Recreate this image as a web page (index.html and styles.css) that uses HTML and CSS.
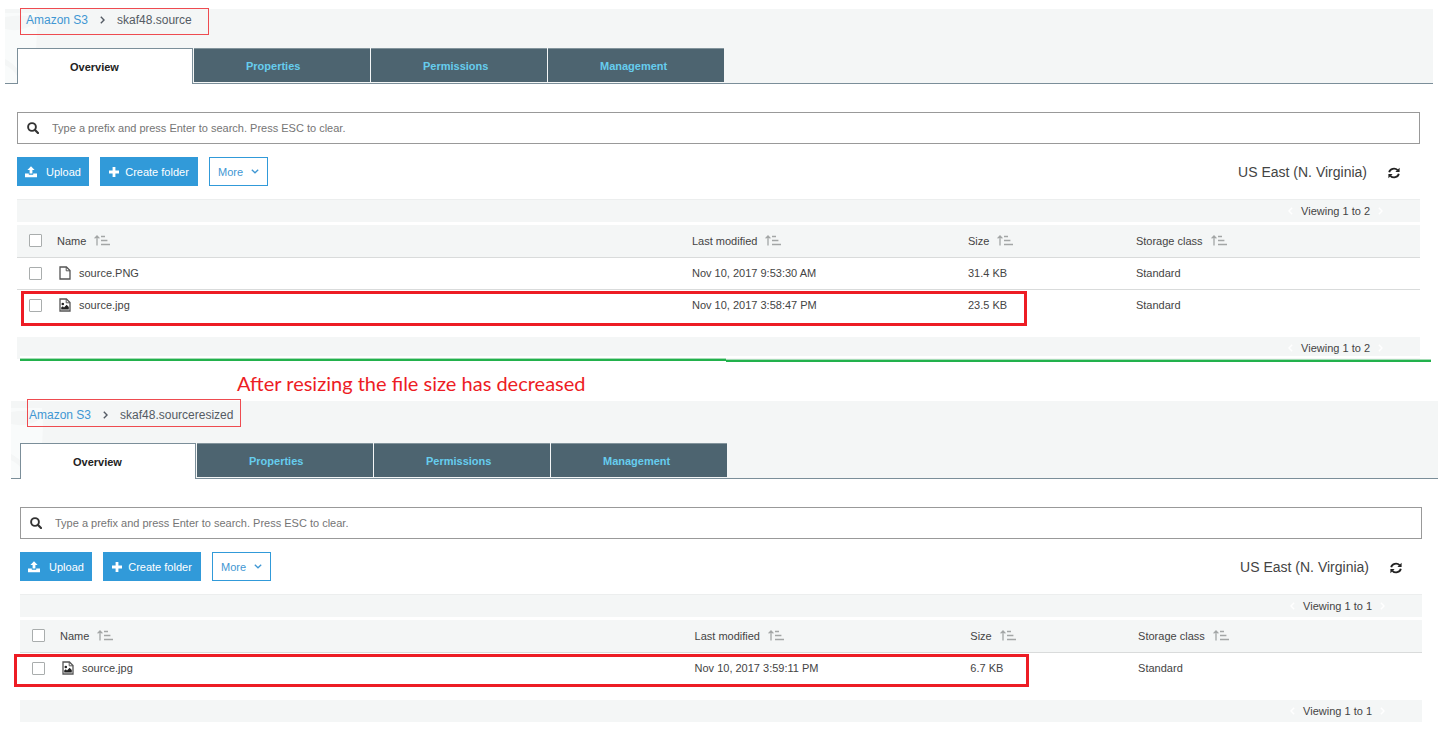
FILE: index.html
```html
<!DOCTYPE html>
<html lang="en">
<head>
<meta charset="utf-8">
<title>Amazon S3 bucket comparison</title>
<link rel="stylesheet" href="styles.css">
</head>
<body>
<svg class="sprite" aria-hidden="true">
  <symbol id="search" viewBox="0 0 12 12"><circle cx="5" cy="5" r="3.9" fill="none" stroke="currentColor" stroke-width="1.9"/><path d="M7.8 7.8L11 11" stroke="currentColor" stroke-width="2.2" stroke-linecap="round"/></symbol>
  <symbol id="upload" viewBox="0 0 12 12"><path d="M6 0.2L9.6 4H7.4V7.6H4.6V4H2.4Z" fill="currentColor"/><path d="M0 7.6H3.8V8.8H8.2V7.6H12V11.2H0Z" fill="currentColor"/></symbol>
  <symbol id="plus" viewBox="0 0 10 10"><path d="M5 0V10M0 5H10" stroke="currentColor" stroke-width="2.8"/></symbol>
  <symbol id="down" viewBox="0 0 8 5"><path d="M0.8 0.8L4 3.8L7.2 0.8" fill="none" stroke="currentColor" stroke-width="1.3"/></symbol>
  <symbol id="right" viewBox="0 0 5 8"><path d="M0.8 0.8L4 4L0.8 7.2" fill="none" stroke="currentColor" stroke-width="1.4"/></symbol>
  <symbol id="left" viewBox="0 0 5 8"><path d="M4.2 0.8L1 4L4.2 7.2" fill="none" stroke="currentColor" stroke-width="1.4"/></symbol>
  <symbol id="refresh" viewBox="0 0 12 12"><path d="M1.2 5.2A4.8 4.3 0 0 1 9.6 3.2M10.8 6.8A4.8 4.3 0 0 1 2.4 8.8" fill="none" stroke="currentColor" stroke-width="1.8"/><path d="M11.6 0.8V5H7.4ZM0.4 11.2V7H4.6Z" fill="currentColor"/></symbol>
  <symbol id="sort" viewBox="0 0 16 11"><path d="M3 10.5V1.2M0.6 3.4L3 1L5.4 3.4M7 1.5H11M7 5.5H13.4M7 9.5H16" fill="none" stroke="currentColor" stroke-width="1.3"/></symbol>
  <symbol id="file" viewBox="0 0 12 14"><path d="M1 1H7.4L11 4.6V13H1Z" fill="#fff" stroke="currentColor" stroke-width="1.3"/><path d="M7.2 1V4.8H11" fill="none" stroke="currentColor"/></symbol>
  <symbol id="image" viewBox="0 0 12 14"><path d="M1 1H7.4L11 4.6V13H1Z" fill="#fff" stroke="currentColor" stroke-width="1.3"/><path d="M7.2 1V4.8H11" fill="none" stroke="currentColor"/><circle cx="3.8" cy="6" r="1.3" fill="#222"/><path d="M2.2 11.4V9.6L3.8 8.2L5 9.4L7.6 6.8L9.8 9V11.4Z" fill="#222"/></symbol>
  <symbol id="mark" viewBox="0 0 33 70"><path d="M0 0H31Q35 40 22 70H0Z" fill="#f9fbfb"/><path d="M0 16Q16 20 31 10V4Q14 1 0 4ZM0 46Q8 50 16 60L13 64Q7 55 0 52Z" fill="#f4f6f6"/></symbol>
</svg>

<section class="panel panel-source">
  <header class="head">
    <svg class="mark" aria-hidden="true"><use href="#mark"/></svg>
    <nav class="crumbs" aria-label="Breadcrumb"><a href="#">Amazon S3</a><svg class="chev" aria-hidden="true"><use href="#right"/></svg><span>skaf48.source</span></nav>
    <div class="tabs">
      <button class="tab active" type="button">Overview</button>
      <button class="tab" type="button">Properties</button>
      <button class="tab" type="button">Permissions</button>
      <button class="tab" type="button">Management</button>
    </div>
  </header>
  <div class="content">
    <label class="search"><svg class="i12" aria-hidden="true"><use href="#search"/></svg><input type="text" aria-label="Search by prefix" placeholder="Type a prefix and press Enter to search. Press ESC to clear."></label>
    <div class="actions">
      <button class="btn upload" type="button"><svg class="i12" aria-hidden="true"><use href="#upload"/></svg>Upload</button>
      <button class="btn create" type="button"><svg class="i10" aria-hidden="true"><use href="#plus"/></svg>Create folder</button>
      <button class="btn more" type="button">More<svg class="down" aria-hidden="true"><use href="#down"/></svg></button>
      <span class="region">US East (N. Virginia)</span>
      <button class="refresh" type="button" aria-label="Refresh"><svg class="i12" aria-hidden="true"><use href="#refresh"/></svg></button>
    </div>
    <div class="pager"><svg class="chev" aria-hidden="true"><use href="#left"/></svg>Viewing 1 to 2<svg class="chev" aria-hidden="true"><use href="#right"/></svg></div>
    <table class="files">
      <colgroup><col class="c-check"><col class="c-name"><col class="c-date"><col class="c-size"><col class="c-class"></colgroup>
      <thead><tr>
        <th><input type="checkbox" aria-label="Select all"></th>
        <th>Name<svg class="sort" aria-hidden="true"><use href="#sort"/></svg></th>
        <th>Last modified<svg class="sort" aria-hidden="true"><use href="#sort"/></svg></th>
        <th>Size<svg class="sort" aria-hidden="true"><use href="#sort"/></svg></th>
        <th>Storage class<svg class="sort" aria-hidden="true"><use href="#sort"/></svg></th>
      </tr></thead>
      <tbody>
        <tr><td><input type="checkbox" aria-label="Select source.PNG"></td><td><svg class="doc" aria-hidden="true"><use href="#file"/></svg>source.PNG</td><td>Nov 10, 2017 9:53:30 AM</td><td>31.4 KB</td><td>Standard</td></tr>
        <tr class="marked"><td><input type="checkbox" aria-label="Select source.jpg"></td><td><svg class="doc" aria-hidden="true"><use href="#image"/></svg>source.jpg</td><td>Nov 10, 2017 3:58:47 PM</td><td>23.5 KB</td><td>Standard</td></tr>
      </tbody>
    </table>
    <div class="pager foot"><svg class="chev" aria-hidden="true"><use href="#left"/></svg>Viewing 1 to 2<svg class="chev" aria-hidden="true"><use href="#right"/></svg></div>
  </div>
</section>

<div class="divider"><span></span><span></span></div>
<p class="note">After resizing the file size has decreased</p>

<section class="panel panel-resized">
  <header class="head">
    <svg class="mark" aria-hidden="true"><use href="#mark"/></svg>
    <nav class="crumbs" aria-label="Breadcrumb"><a href="#">Amazon S3</a><svg class="chev" aria-hidden="true"><use href="#right"/></svg><span>skaf48.sourceresized</span></nav>
    <div class="tabs">
      <button class="tab active" type="button">Overview</button>
      <button class="tab" type="button">Properties</button>
      <button class="tab" type="button">Permissions</button>
      <button class="tab" type="button">Management</button>
    </div>
  </header>
  <div class="content">
    <label class="search"><svg class="i12" aria-hidden="true"><use href="#search"/></svg><input type="text" aria-label="Search by prefix" placeholder="Type a prefix and press Enter to search. Press ESC to clear."></label>
    <div class="actions">
      <button class="btn upload" type="button"><svg class="i12" aria-hidden="true"><use href="#upload"/></svg>Upload</button>
      <button class="btn create" type="button"><svg class="i10" aria-hidden="true"><use href="#plus"/></svg>Create folder</button>
      <button class="btn more" type="button">More<svg class="down" aria-hidden="true"><use href="#down"/></svg></button>
      <span class="region">US East (N. Virginia)</span>
      <button class="refresh" type="button" aria-label="Refresh"><svg class="i12" aria-hidden="true"><use href="#refresh"/></svg></button>
    </div>
    <div class="pager"><svg class="chev" aria-hidden="true"><use href="#left"/></svg>Viewing 1 to 1<svg class="chev" aria-hidden="true"><use href="#right"/></svg></div>
    <table class="files">
      <colgroup><col class="c-check"><col class="c-name"><col class="c-date"><col class="c-size"><col class="c-class"></colgroup>
      <thead><tr>
        <th><input type="checkbox" aria-label="Select all"></th>
        <th>Name<svg class="sort" aria-hidden="true"><use href="#sort"/></svg></th>
        <th>Last modified<svg class="sort" aria-hidden="true"><use href="#sort"/></svg></th>
        <th>Size<svg class="sort" aria-hidden="true"><use href="#sort"/></svg></th>
        <th>Storage class<svg class="sort" aria-hidden="true"><use href="#sort"/></svg></th>
      </tr></thead>
      <tbody>
        <tr class="marked"><td><input type="checkbox" aria-label="Select source.jpg"></td><td><svg class="doc" aria-hidden="true"><use href="#image"/></svg>source.jpg</td><td>Nov 10, 2017 3:59:11 PM</td><td>6.7 KB</td><td>Standard</td></tr>
      </tbody>
    </table>
    <div class="pager foot"><svg class="chev" aria-hidden="true"><use href="#left"/></svg>Viewing 1 to 1<svg class="chev" aria-hidden="true"><use href="#right"/></svg></div>
  </div>
</section>
</body>
</html>
```

FILE: styles.css
```css
* { box-sizing: border-box; }

body {
  margin: 0;
  background: #fff;
  color: #444;
  font: 11px/16px "Liberation Sans", Arial, sans-serif;
}

button, input { font: inherit; color: inherit; margin: 0; }
button { padding: 0; border: 0; background: none; }
svg { flex: none; }

.sprite { position: absolute; width: 0; height: 0; }
.i12 { width: 12px; height: 12px; }
.i10 { width: 10px; height: 10px; }
.chev { width: 5px; height: 8px; }
.down { width: 8px; height: 5px; }

/* Panels */
.panel-source { padding: 9px 5px 0; }
.panel-resized { padding-left: 11px; }

/* Header: breadcrumb and tabs */
.head {
  position: relative;
  background: #f4f6f6;
  border-bottom: 1px solid #7b8e99;
}
.panel-source .head { padding-left: 12px; }
.panel-resized .head { padding: 3px 0 0 9px; }

.mark { position: absolute; left: 0; bottom: 0; width: 33px; height: 70px; }

.crumbs {
  position: relative;
  display: flex;
  align-items: center;
  gap: 12px;
  width: fit-content;
  height: 21px;
  margin: 0 0 18px 9px;
  font-size: 12px;
  color: #545b64;
}
.crumbs a { color: #3f97d3; text-decoration: none; }
.crumbs::after {
  content: "";
  position: absolute;
  border: 1px solid #ee4b50;
  pointer-events: none;
}
.panel-source .crumbs::after { inset: -1px -17px -5px -6px; }
.panel-resized .crumbs::after { inset: -5px -8px -2px -2px; }

.tabs { position: relative; display: flex; align-items: flex-start; gap: 1px; margin-bottom: -1px; }
.tab {
  width: 176px;
  height: 34px;
  padding-left: 52px;
  border-top: 1px solid #83949c;
  background: #4d6470;
  color: #66cdee;
  font-weight: bold;
  text-align: left;
}
.tab.active {
  height: 36px;
  border: 1px solid #7b8e99;
  border-bottom: 0;
  background: #fff;
  color: #222;
}

/* Content */
.panel-source .content { padding: 28px 13px 0 12px; }
.panel-resized .content { padding: 28px 16px 0 9px; }

.search {
  display: flex;
  align-items: center;
  gap: 13px;
  height: 32px;
  padding: 0 9px;
  border: 1px solid #999;
  color: #333;
}
.search input {
  flex: 1;
  min-width: 0;
  padding: 0;
  border: 0;
  outline: 0;
  background: none;
}
.search input::placeholder { color: #757575; opacity: 1; }

.actions { display: flex; align-items: center; gap: 11px; margin: 13px 0; }
.btn {
  display: flex;
  align-items: center;
  justify-content: center;
  height: 29px;
  border: 1px solid #319ad9;
  background: #319ad9;
  color: #fff;
}
.upload { width: 72px; gap: 9px; }
.create { width: 98px; gap: 6px; }
.more { width: 59px; gap: 8px; background: #fff; color: #3f97d3; }
.region { margin-left: auto; font-size: 14px; }
.refresh { display: flex; margin: 2px 20px 0 10px; color: #222; }

.pager {
  display: flex;
  align-items: center;
  justify-content: flex-end;
  gap: 8px;
  height: 23px;
  padding-right: 37px;
  border-top: 1px solid #eceeee;
  background: #f4f6f6;
}
.pager .chev { color: #fff; }
.pager.foot { height: 22px; margin-top: 15px; border-top: 0; }

.files {
  width: 100%;
  margin-top: 3px;
  border-collapse: separate;
  border-spacing: 0;
  table-layout: fixed;
}
.c-check { width: 40px; }
.c-name { width: 45.26%; }
.c-date { width: 19.67%; }
.c-size { width: 11.97%; }
.c-class { width: auto; }

.files th, .files td {
  height: 32px;
  padding: 0 0 1px;
  border-bottom: 1px solid #d9dbdb;
  text-align: left;
  vertical-align: middle;
  font-weight: normal;
  white-space: nowrap;
}
.files th { height: 33px; background: #f4f6f6; }
.files tbody tr:last-child td { border-bottom-color: transparent; }
.files input {
  appearance: none;
  display: block;
  width: 13px;
  height: 13px;
  margin-left: 12px;
  border: 1px solid #a9adad;
  border-radius: 1px;
  background: #fff;
}
.sort { width: 16px; height: 11px; margin-left: 8px; color: #a3a6a6; vertical-align: -1px; }
.doc { width: 12px; height: 14px; margin: 0 8px 0 2px; color: #555; vertical-align: -3px; }

/* Highlight frame drawn round a file row */
.files tbody { position: relative; }
.marked td:first-child { position: static; }
.marked { position: relative; }
.marked td:first-child::after {
  content: "";
  position: absolute;
  border: 3px solid #ed1c24;
  pointer-events: none;
}
.panel-source .marked td:first-child::after { inset: 1px 28% -4px 4px; }
.panel-resized .marked td:first-child::after { inset: 1px 28% -2px -6px; }

/* Green rule and caption between the panels */
.divider {
  position: relative;
  display: flex;
  margin: -3px 7px 0 20px;
  border-top: 2px solid #fff;
}
.divider span { flex: 1; height: 3px; border-top: 1px solid #a5dcb6; background: #22b14c; }
.divider span:last-child { margin-top: 1px; }

.note {
  margin: 0;
  padding: 9px 0 6px 237px;
  color: #ed1c24;
  font: 20px/24px Lato, Carlito, sans-serif;
}
```
